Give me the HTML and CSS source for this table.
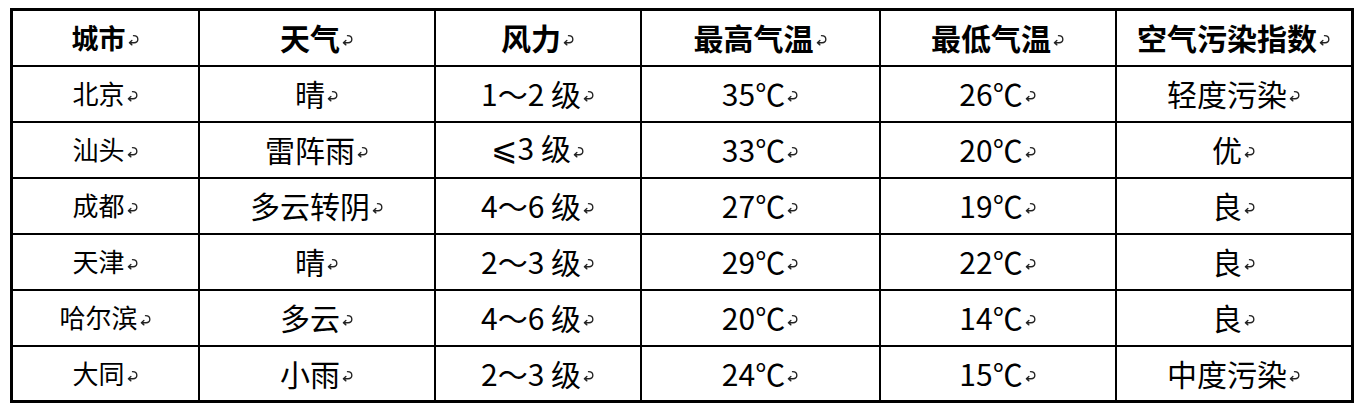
FILE: index.html
```html
<!DOCTYPE html>
<html lang="zh-CN">
<head>
<meta charset="utf-8">
<title>天气</title>
<link rel="stylesheet" href="styles.css">
</head>
<body>
<div class="grid" role="table">
  <div class="cell head first"><span class="t">城市</span><svg class="pm" viewBox="0 0 12 11"><path d="M6 1.5Q10 1.5 10 4.8Q10 8 6.5 8H2.2M4.5 6 2.2 8 4.5 10"/></svg></div>
  <div class="cell head"><span class="t">天气</span><svg class="pm" viewBox="0 0 12 11"><path d="M6 1.5Q10 1.5 10 4.8Q10 8 6.5 8H2.2M4.5 6 2.2 8 4.5 10"/></svg></div>
  <div class="cell head"><span class="t">风力</span><svg class="pm" viewBox="0 0 12 11"><path d="M6 1.5Q10 1.5 10 4.8Q10 8 6.5 8H2.2M4.5 6 2.2 8 4.5 10"/></svg></div>
  <div class="cell head"><span class="t">最高气温</span><svg class="pm" viewBox="0 0 12 11"><path d="M6 1.5Q10 1.5 10 4.8Q10 8 6.5 8H2.2M4.5 6 2.2 8 4.5 10"/></svg></div>
  <div class="cell head"><span class="t">最低气温</span><svg class="pm" viewBox="0 0 12 11"><path d="M6 1.5Q10 1.5 10 4.8Q10 8 6.5 8H2.2M4.5 6 2.2 8 4.5 10"/></svg></div>
  <div class="cell head"><span class="t">空气污染指数</span><svg class="pm" viewBox="0 0 12 11"><path d="M6 1.5Q10 1.5 10 4.8Q10 8 6.5 8H2.2M4.5 6 2.2 8 4.5 10"/></svg></div>

  <div class="cell first"><span class="t">北京</span><svg class="pm" viewBox="0 0 12 11"><path d="M6 1.5Q10 1.5 10 4.8Q10 8 6.5 8H2.2M4.5 6 2.2 8 4.5 10"/></svg></div>
  <div class="cell"><span class="t">晴</span><svg class="pm" viewBox="0 0 12 11"><path d="M6 1.5Q10 1.5 10 4.8Q10 8 6.5 8H2.2M4.5 6 2.2 8 4.5 10"/></svg></div>
  <div class="cell"><span class="t">1～2 级</span><svg class="pm" viewBox="0 0 12 11"><path d="M6 1.5Q10 1.5 10 4.8Q10 8 6.5 8H2.2M4.5 6 2.2 8 4.5 10"/></svg></div>
  <div class="cell"><span class="t">35℃</span><svg class="pm" viewBox="0 0 12 11"><path d="M6 1.5Q10 1.5 10 4.8Q10 8 6.5 8H2.2M4.5 6 2.2 8 4.5 10"/></svg></div>
  <div class="cell"><span class="t">26℃</span><svg class="pm" viewBox="0 0 12 11"><path d="M6 1.5Q10 1.5 10 4.8Q10 8 6.5 8H2.2M4.5 6 2.2 8 4.5 10"/></svg></div>
  <div class="cell"><span class="t">轻度污染</span><svg class="pm" viewBox="0 0 12 11"><path d="M6 1.5Q10 1.5 10 4.8Q10 8 6.5 8H2.2M4.5 6 2.2 8 4.5 10"/></svg></div>

  <div class="cell first"><span class="t">汕头</span><svg class="pm" viewBox="0 0 12 11"><path d="M6 1.5Q10 1.5 10 4.8Q10 8 6.5 8H2.2M4.5 6 2.2 8 4.5 10"/></svg></div>
  <div class="cell"><span class="t">雷阵雨</span><svg class="pm" viewBox="0 0 12 11"><path d="M6 1.5Q10 1.5 10 4.8Q10 8 6.5 8H2.2M4.5 6 2.2 8 4.5 10"/></svg></div>
  <div class="cell"><span class="t"><span class="le">⩽</span>3 级</span><svg class="pm" viewBox="0 0 12 11"><path d="M6 1.5Q10 1.5 10 4.8Q10 8 6.5 8H2.2M4.5 6 2.2 8 4.5 10"/></svg></div>
  <div class="cell"><span class="t">33℃</span><svg class="pm" viewBox="0 0 12 11"><path d="M6 1.5Q10 1.5 10 4.8Q10 8 6.5 8H2.2M4.5 6 2.2 8 4.5 10"/></svg></div>
  <div class="cell"><span class="t">20℃</span><svg class="pm" viewBox="0 0 12 11"><path d="M6 1.5Q10 1.5 10 4.8Q10 8 6.5 8H2.2M4.5 6 2.2 8 4.5 10"/></svg></div>
  <div class="cell"><span class="t">优</span><svg class="pm" viewBox="0 0 12 11"><path d="M6 1.5Q10 1.5 10 4.8Q10 8 6.5 8H2.2M4.5 6 2.2 8 4.5 10"/></svg></div>

  <div class="cell first"><span class="t">成都</span><svg class="pm" viewBox="0 0 12 11"><path d="M6 1.5Q10 1.5 10 4.8Q10 8 6.5 8H2.2M4.5 6 2.2 8 4.5 10"/></svg></div>
  <div class="cell"><span class="t">多云转阴</span><svg class="pm" viewBox="0 0 12 11"><path d="M6 1.5Q10 1.5 10 4.8Q10 8 6.5 8H2.2M4.5 6 2.2 8 4.5 10"/></svg></div>
  <div class="cell"><span class="t">4～6 级</span><svg class="pm" viewBox="0 0 12 11"><path d="M6 1.5Q10 1.5 10 4.8Q10 8 6.5 8H2.2M4.5 6 2.2 8 4.5 10"/></svg></div>
  <div class="cell"><span class="t">27℃</span><svg class="pm" viewBox="0 0 12 11"><path d="M6 1.5Q10 1.5 10 4.8Q10 8 6.5 8H2.2M4.5 6 2.2 8 4.5 10"/></svg></div>
  <div class="cell"><span class="t">19℃</span><svg class="pm" viewBox="0 0 12 11"><path d="M6 1.5Q10 1.5 10 4.8Q10 8 6.5 8H2.2M4.5 6 2.2 8 4.5 10"/></svg></div>
  <div class="cell"><span class="t">良</span><svg class="pm" viewBox="0 0 12 11"><path d="M6 1.5Q10 1.5 10 4.8Q10 8 6.5 8H2.2M4.5 6 2.2 8 4.5 10"/></svg></div>

  <div class="cell first"><span class="t">天津</span><svg class="pm" viewBox="0 0 12 11"><path d="M6 1.5Q10 1.5 10 4.8Q10 8 6.5 8H2.2M4.5 6 2.2 8 4.5 10"/></svg></div>
  <div class="cell"><span class="t">晴</span><svg class="pm" viewBox="0 0 12 11"><path d="M6 1.5Q10 1.5 10 4.8Q10 8 6.5 8H2.2M4.5 6 2.2 8 4.5 10"/></svg></div>
  <div class="cell"><span class="t">2～3 级</span><svg class="pm" viewBox="0 0 12 11"><path d="M6 1.5Q10 1.5 10 4.8Q10 8 6.5 8H2.2M4.5 6 2.2 8 4.5 10"/></svg></div>
  <div class="cell"><span class="t">29℃</span><svg class="pm" viewBox="0 0 12 11"><path d="M6 1.5Q10 1.5 10 4.8Q10 8 6.5 8H2.2M4.5 6 2.2 8 4.5 10"/></svg></div>
  <div class="cell"><span class="t">22℃</span><svg class="pm" viewBox="0 0 12 11"><path d="M6 1.5Q10 1.5 10 4.8Q10 8 6.5 8H2.2M4.5 6 2.2 8 4.5 10"/></svg></div>
  <div class="cell"><span class="t">良</span><svg class="pm" viewBox="0 0 12 11"><path d="M6 1.5Q10 1.5 10 4.8Q10 8 6.5 8H2.2M4.5 6 2.2 8 4.5 10"/></svg></div>

  <div class="cell first"><span class="t">哈尔滨</span><svg class="pm" viewBox="0 0 12 11"><path d="M6 1.5Q10 1.5 10 4.8Q10 8 6.5 8H2.2M4.5 6 2.2 8 4.5 10"/></svg></div>
  <div class="cell"><span class="t">多云</span><svg class="pm" viewBox="0 0 12 11"><path d="M6 1.5Q10 1.5 10 4.8Q10 8 6.5 8H2.2M4.5 6 2.2 8 4.5 10"/></svg></div>
  <div class="cell"><span class="t">4～6 级</span><svg class="pm" viewBox="0 0 12 11"><path d="M6 1.5Q10 1.5 10 4.8Q10 8 6.5 8H2.2M4.5 6 2.2 8 4.5 10"/></svg></div>
  <div class="cell"><span class="t">20℃</span><svg class="pm" viewBox="0 0 12 11"><path d="M6 1.5Q10 1.5 10 4.8Q10 8 6.5 8H2.2M4.5 6 2.2 8 4.5 10"/></svg></div>
  <div class="cell"><span class="t">14℃</span><svg class="pm" viewBox="0 0 12 11"><path d="M6 1.5Q10 1.5 10 4.8Q10 8 6.5 8H2.2M4.5 6 2.2 8 4.5 10"/></svg></div>
  <div class="cell"><span class="t">良</span><svg class="pm" viewBox="0 0 12 11"><path d="M6 1.5Q10 1.5 10 4.8Q10 8 6.5 8H2.2M4.5 6 2.2 8 4.5 10"/></svg></div>

  <div class="cell first"><span class="t">大同</span><svg class="pm" viewBox="0 0 12 11"><path d="M6 1.5Q10 1.5 10 4.8Q10 8 6.5 8H2.2M4.5 6 2.2 8 4.5 10"/></svg></div>
  <div class="cell"><span class="t">小雨</span><svg class="pm" viewBox="0 0 12 11"><path d="M6 1.5Q10 1.5 10 4.8Q10 8 6.5 8H2.2M4.5 6 2.2 8 4.5 10"/></svg></div>
  <div class="cell"><span class="t">2～3 级</span><svg class="pm" viewBox="0 0 12 11"><path d="M6 1.5Q10 1.5 10 4.8Q10 8 6.5 8H2.2M4.5 6 2.2 8 4.5 10"/></svg></div>
  <div class="cell"><span class="t">24℃</span><svg class="pm" viewBox="0 0 12 11"><path d="M6 1.5Q10 1.5 10 4.8Q10 8 6.5 8H2.2M4.5 6 2.2 8 4.5 10"/></svg></div>
  <div class="cell"><span class="t">15℃</span><svg class="pm" viewBox="0 0 12 11"><path d="M6 1.5Q10 1.5 10 4.8Q10 8 6.5 8H2.2M4.5 6 2.2 8 4.5 10"/></svg></div>
  <div class="cell"><span class="t">中度污染</span><svg class="pm" viewBox="0 0 12 11"><path d="M6 1.5Q10 1.5 10 4.8Q10 8 6.5 8H2.2M4.5 6 2.2 8 4.5 10"/></svg></div>
</div>
</body>
</html>
```

FILE: styles.css
```css
html, body {
  background: #ffffff;
}

body {
  margin: 8px 0 0 10px;
  font-family: "Noto Sans CJK SC", "Liberation Sans", sans-serif;
  color: #000000;
}

.grid {
  display: grid;
  width: 1338px;
  grid-template-columns: 185px 234px 204px 237px 234px 234px;
  grid-template-rows: repeat(6, 54px) 53px;
  gap: 2px;
  background: #000000;
  border: 3px solid #000000;
}

.cell {
  background: #ffffff;
  display: flex;
  align-items: center;
  justify-content: center;
  font-size: 30px;
  line-height: 1;
  white-space: nowrap;
  padding-bottom: 2px;
}

.cell.first {
  font-size: 26px;
}

.head {
  font-weight: bold;
}

.head.first {
  font-size: 27px;
}

.t {
  display: inline-block;
}

.le {
  font-family: "DejaVu Sans", "Noto Sans CJK SC", sans-serif;
  font-size: 1.05em;
}

.pm {
  width: 13px;
  height: 12px;
  margin-left: 1px;
  margin-top: 6px;
  flex: none;
  fill: none;
  stroke: #222222;
  stroke-width: 1.25;
  stroke-linecap: round;
  stroke-linejoin: round;
}
```
